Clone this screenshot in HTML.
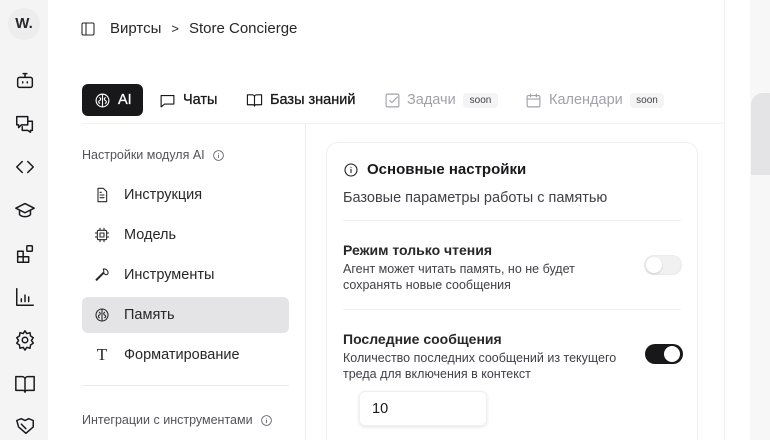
<!DOCTYPE html>
<html style="width:770px;height:440px;overflow:hidden"><head><meta charset="utf-8"><style>
*{box-sizing:border-box;margin:0;padding:0}
body{width:770px;height:440px;overflow:hidden;background:#fff;font-family:"Liberation Sans","Noto Sans CJK SC",sans-serif;color:#18181b;position:relative}
.side{position:absolute;left:0;top:0;width:48px;height:440px;background:#f4f4f5}
.logo{position:absolute;left:8px;top:8px;width:32px;height:32px;border-radius:50%;background:#ededee;font-weight:bold;font-size:15px;text-align:center;line-height:32px;color:#27272a}
.si{position:absolute;left:14px;width:22px;height:22px}
svg{fill:none;stroke:currentColor;stroke-width:1.6;stroke-linecap:round;stroke-linejoin:round}
.abs{position:absolute}
.crumb{left:80px;top:20px;font-size:15px;color:#27272a;display:flex;align-items:center;gap:10px}
.tab{position:absolute;top:84px;height:32px;display:flex;align-items:center;font-size:14.5px;color:#18181b;white-space:nowrap;-webkit-text-stroke:0.3px currentColor}
.tab svg{position:absolute;left:0;top:8px}
.tab span.t{position:absolute;top:8px}
.on{background:#18181b;color:#fff;border-radius:6px}
.dis{color:#a1a1aa;-webkit-text-stroke:0}
.soon{position:absolute;top:9px;height:15px;background:#f4f4f5;color:#3f3f46;font-size:10px;line-height:15px;text-align:center;border-radius:4px}
.hline{left:82px;top:123px;width:642px;height:1px;background:#f1f1f2}
.vline{left:305px;top:124px;width:1px;height:316px;background:#ececee}
.vline2{left:724px;top:0;width:1px;height:440px;background:#f1f1f2}
.rp{left:750px;top:0;width:20px;height:440px;background:#f7f7f8}
.rbox{left:751px;top:93px;width:19px;height:82px;background:#e4e4e7;border-radius:12px 0 0 0}
.nav{left:82px;width:207px;height:36px;display:flex;align-items:center;padding-left:12px;gap:14px;font-size:14.5px;color:#27272a;border-radius:6px}
.nav.on{background:#e4e4e7;color:#27272a}
.lbl{font-size:12.5px;color:#52525b;display:flex;align-items:center;gap:7px}
.card{left:326px;top:142px;width:372px;height:298px;border:1px solid #f0f0f1;border-bottom:none;border-radius:12px 12px 0 0;background:#fff}
.t1{left:343px;top:161px;font-size:15px;font-weight:bold;display:flex;align-items:center;gap:8px}
.t2{left:343px;top:190px;font-size:14.5px;color:#3f3f46}
.sep{left:343px;height:1px;width:338px;background:#f0f0f1}
.h{left:343px;font-size:14px;font-weight:bold;color:#27272a}
.d{left:343px;font-size:12.5px;color:#3f3f46;line-height:16px;width:300px}
.tg{width:38px;height:20px;border-radius:10px}
.inp{left:359px;top:391px;width:128px;height:35px;border-radius:6px;box-shadow:0 1px 3px rgba(0,0,0,.12);border:1px solid #f0f0f1;font-size:14.5px;padding:9px 12px}
</style></head><body>
<div class="side">
<div class="logo">W.</div>
<svg class="si" style="top:70px" viewBox="0 0 24 24"><rect x="4" y="8" width="16" height="11" rx="2"/><path d="M12 4v4M10 4h4M9.5 13v1M14.5 13v1"/></svg>
<svg class="si" style="top:113px" viewBox="0 0 24 24"><path d="M3 4h12v9H8l-3 3v-3H3zM15 9h5v10h-2v2l-3-2h-6v-4"/></svg>
<svg class="si" style="top:156px" viewBox="0 0 24 24"><path d="M9 6l-6 6 6 6M15 6l6 6-6 6"/></svg>
<svg class="si" style="top:199px" viewBox="0 0 24 24"><path d="M2 10l10-5 10 5-10 5zM6 12v5c3 3 9 3 12 0v-5"/></svg>
<svg class="si" style="top:243px" viewBox="0 0 24 24"><path d="M4 9h6v12H4zM4 15h12v6H10M10 9v6"/><rect x="14" y="3" width="6" height="6" rx="1"/></svg>
<svg class="si" style="top:286px" viewBox="0 0 24 24"><path d="M3 3v18h18M8 17v-3M12 17v-7M16 17v-5"/></svg>
<svg class="si" style="top:329px" viewBox="0 0 24 24"><circle cx="12" cy="12" r="3"/><path d="M12 2l2 3 3.5-1 .5 3.5 3 2-2 3 2 3-3 2-.5 3.5-3.5-1-2 3-2-3-3.5 1L6 17.5l-3-2 2-3-2-3 3-2L6.5 4 10 5z"/></svg>
<svg class="si" style="top:373px" viewBox="0 0 24 24"><path d="M2 4h7a3 3 0 013 3v14a2 2 0 00-2-2H2zM22 4h-7a3 3 0 00-3 3v14a2 2 0 012-2h8z"/></svg>
<svg class="si" style="top:415px" viewBox="0 0 24 24"><path d="M3 6l5-2 4 2 4-2 5 2v7l-8 7-8-7z M8 10l4 4M10 12l3 3"/></svg>
</div>

<div class="abs crumb"><svg width="16" height="16" viewBox="0 0 24 24"><rect x="3" y="3" width="18" height="18" rx="2"/><path d="M9 3v18"/></svg><span style="margin-left:4px">Виртсы</span><span style="font-size:13px">&gt;</span><span>Store Concierge</span></div>

<div class="tab on" style="left:82px;width:61px"><svg width="17" height="17" viewBox="0 0 24 24" style="left:12px"><circle cx="12" cy="12" r="9"/><path d="M12 3v18M8 8c2 1 2 3 0 4s-2 3 0 4M16 8c-2 1-2 3 0 4s2 3 0 4"/></svg><span class="t" style="left:36px">AI</span></div>
<div class="tab" style="left:159px"><svg width="17" height="17" viewBox="0 0 24 24"><path d="M3 5h18v12H8l-5 4z"/></svg><span class="t" style="left:24px">Чаты</span></div>
<div class="tab" style="left:246px"><svg width="17" height="17" viewBox="0 0 24 24"><path d="M2 4h7a3 3 0 013 3v13a2 2 0 00-2-2H2zM22 4h-7a3 3 0 00-3 3v13a2 2 0 012-2h8z"/></svg><span class="t" style="left:24px">Базы знаний</span></div>
<div class="tab dis" style="left:384px"><svg width="17" height="17" viewBox="0 0 24 24"><rect x="3" y="3" width="18" height="18" rx="2"/><path d="M8 12l3 3 8-8"/></svg><span class="t" style="left:23px">Задачи</span></div>
<div class="abs soon" style="left:463px;top:93px;width:35px">soon</div>
<div class="tab dis" style="left:525px"><svg width="17" height="17" viewBox="0 0 24 24"><rect x="3" y="5" width="18" height="16" rx="2"/><path d="M3 10h18M8 3v4M16 3v4"/></svg><span class="t" style="left:24px">Календари</span></div>
<div class="abs soon" style="left:630px;top:93px;width:34px">soon</div>

<div class="abs hline"></div>
<div class="abs vline"></div>
<div class="abs vline2"></div>
<div class="abs rp"></div>
<div class="abs rbox"></div>

<div class="abs lbl" style="left:82px;top:148px">Настройки модуля AI <svg width="13" height="13" viewBox="0 0 24 24" style="stroke-width:1.5"><circle cx="12" cy="12" r="9"/><path d="M12 11v5M12 8h0"/></svg></div>
<div class="abs nav" style="top:177px"><svg width="16" height="16" viewBox="0 0 24 24"><path d="M6 2h8l5 5v15H6zM9 12h6M9 16h6M9 8h2"/></svg>Инструкция</div>
<div class="abs nav" style="top:217px"><svg width="16" height="16" viewBox="0 0 24 24"><rect x="5" y="5" width="14" height="14" rx="2"/><rect x="9" y="9" width="6" height="6"/><path d="M9 2v3M15 2v3M9 19v3M15 19v3M2 9h3M2 15h3M19 9h3M19 15h3"/></svg>Модель</div>
<div class="abs nav" style="top:257px"><svg width="16" height="16" viewBox="0 0 24 24"><path d="M14.7 6.3a4 4 0 005 5L21 10a6 6 0 00-7-7zM15 9L4 20l-1-1L14 8"/></svg>Инструменты</div>
<div class="abs nav on" style="top:297px"><svg width="16" height="16" viewBox="0 0 24 24"><circle cx="12" cy="12" r="9"/><path d="M12 3v18M8 8c2 1 2 3 0 4s-2 3 0 4M16 8c-2 1-2 3 0 4s2 3 0 4"/></svg>Память</div>
<div class="abs nav" style="top:337px"><span style="font-family:'Liberation Serif',serif;font-size:17px;width:16px;text-align:center">T</span>Форматирование</div>
<div class="abs" style="left:82px;top:385px;width:207px;height:1px;background:#ececee"></div>
<div class="abs lbl" style="left:82px;top:413px">Интеграции с инструментами <svg width="13" height="13" viewBox="0 0 24 24" style="stroke-width:1.5"><circle cx="12" cy="12" r="9"/><path d="M12 11v5M12 8h0"/></svg></div>

<div class="abs card"></div>
<div class="abs t1"><svg width="16" height="16" viewBox="0 0 24 24"><circle cx="12" cy="12" r="9"/><path d="M12 11v5M12 8h0"/></svg>Основные настройки</div>
<div class="abs t2">Базовые параметры работы с памятью</div>
<div class="abs sep" style="top:220px"></div>
<div class="abs h" style="top:242px">Режим только чтения</div>
<div class="abs d" style="top:261px">Агент может читать память, но не будет<br>сохранять новые сообщения</div>
<div class="abs tg" style="left:644px;top:255px;background:#f1f1f2;box-shadow:inset 0 0 2px rgba(0,0,0,.08)"><div style="position:absolute;left:2px;top:2px;width:16px;height:16px;border-radius:50%;background:#fff;box-shadow:0 1px 2px rgba(0,0,0,.15)"></div></div>
<div class="abs sep" style="top:309px"></div>
<div class="abs h" style="top:331px">Последние сообщения</div>
<div class="abs d" style="top:350px;width:310px">Количество последних сообщений из текущего<br>треда для включения в контекст</div>
<div class="abs tg" style="left:645px;top:344px;background:#18181b"><div style="position:absolute;left:19px;top:2px;width:16px;height:16px;border-radius:50%;background:#fff"></div></div>
<div class="abs inp">10</div>
</body></html>
